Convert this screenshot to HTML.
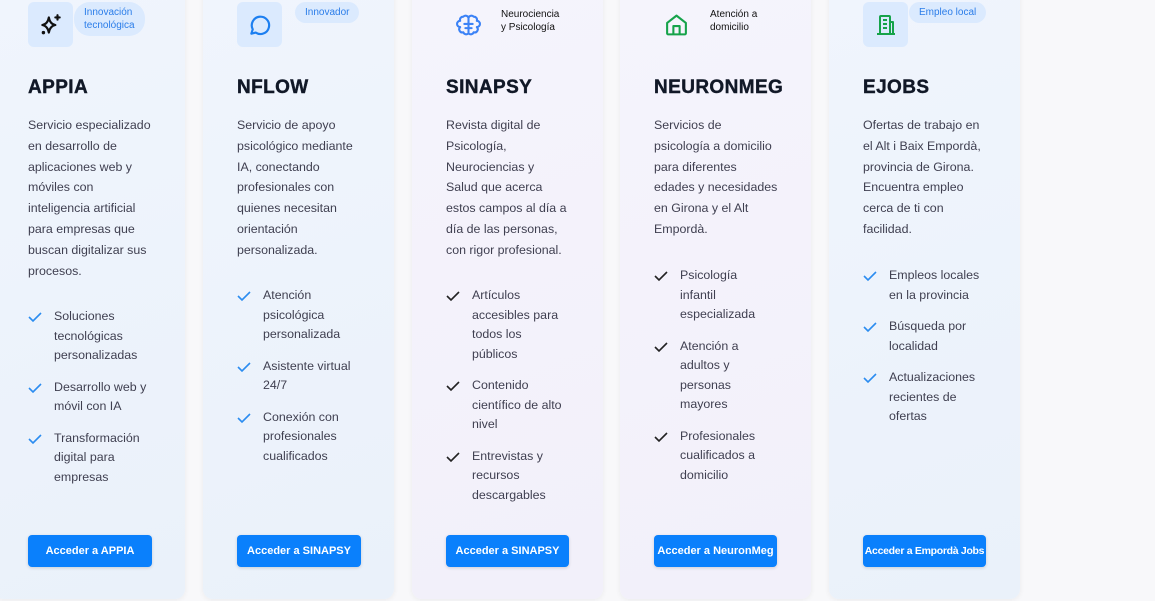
<!DOCTYPE html>
<html><head><meta charset="utf-8"><style>
*{margin:0;padding:0;box-sizing:border-box}
body{width:1155px;height:601px;overflow:hidden;background:#f8f8fa;font-family:"Liberation Sans",sans-serif;position:relative}
.card{position:absolute;top:-20px;width:191px;height:619px;border-radius:10px;box-shadow:0 1px 6px rgba(0,0,0,.06)}
.b{background:linear-gradient(160deg,#f0f5fd,#eaf1fa)}
.p{background:linear-gradient(160deg,#f5f4fc,#f2f0fa)}
.c{position:absolute;left:34px;top:20px;width:180px;height:600px}
.ib{position:absolute;left:0;top:2px;width:45px;height:45px;border-radius:6px;background:#dbeafe;display:flex;align-items:center;justify-content:center}
.bd{position:absolute;top:2px;background:#dbeafe;color:#2b7de9;font-size:10px;line-height:13px;border-radius:16px;padding:4px 10px}
h2{position:absolute;top:77px;left:0;font-size:19px;font-weight:bold;color:#111827;letter-spacing:.4px;-webkit-text-stroke:.4px #111827}
.d{position:absolute;left:0;top:115px;font-size:12.4px;line-height:20.8px;color:#3f3f50;white-space:nowrap}
ul{position:absolute;left:0;list-style:none;font-size:12.4px;line-height:19.5px;color:#3f3f50;white-space:nowrap}
li{position:relative;padding-left:26px;margin-bottom:12px}
li svg{position:absolute;left:0;top:4px}
.btn{position:absolute;left:0;top:535px;height:32px;background:#0a80fc;color:#fff;font-size:11px;font-weight:bold;border-radius:4px;display:flex;align-items:center;justify-content:center;white-space:nowrap;box-shadow:0 1px 3px rgba(0,0,0,.15)}
.sm{position:absolute;font-size:10px;line-height:13px;color:#111}
</style></head><body>

<div class="card b" style="left:-6px"><div class="c">
<div class="ib"><svg width="26" height="26" viewBox="0 0 24 24" fill="none" stroke="#111" stroke-width="2" stroke-linejoin="round" stroke-linecap="round"><path d="M10 5 Q11 11 16 12 Q11 13 10 19 Q9 13 4 12 Q9 11 10 5Z"/><path d="M18 3v4M16 5h4"/><circle cx="5" cy="19" r=".6" fill="#111"/></svg></div>
<div class="bd" style="left:46px">Innovación<br>tecnológica</div>
<h2>APPIA</h2>
<div class="d">Servicio especializado<br>en desarrollo de<br>aplicaciones web y<br>móviles con<br>inteligencia artificial<br>para empresas que<br>buscan digitalizar sus<br>procesos.</div>
<ul style="top:307px">
<li><svg width="14" height="12" viewBox="0 0 14 12"><path d="M1 6l4 4 8-8" fill="none" stroke="#2b8cf0" stroke-width="1.6"/></svg>Soluciones<br>tecnológicas<br>personalizadas</li>
<li><svg width="14" height="12" viewBox="0 0 14 12"><path d="M1 6l4 4 8-8" fill="none" stroke="#2b8cf0" stroke-width="1.6"/></svg>Desarrollo web y<br>móvil con IA</li>
<li><svg width="14" height="12" viewBox="0 0 14 12"><path d="M1 6l4 4 8-8" fill="none" stroke="#2b8cf0" stroke-width="1.6"/></svg>Transformación<br>digital para<br>empresas</li>
</ul>
<div class="btn" style="width:124px">Acceder a APPIA</div>
</div></div>

<div class="card b" style="left:203px"><div class="c">
<div class="ib"><svg width="26" height="26" viewBox="0 0 24 24" fill="none" stroke="#1d7ff0" stroke-width="2" stroke-linejoin="round"><path d="M4 20l1.3-4A8 8 0 1 1 8 19Z"/></svg></div>
<div class="bd" style="left:58px">Innovador</div>
<h2>NFLOW</h2>
<div class="d">Servicio de apoyo<br>psicológico mediante<br>IA, conectando<br>profesionales con<br>quienes necesitan<br>orientación<br>personalizada.</div>
<ul style="top:286px">
<li><svg width="14" height="12" viewBox="0 0 14 12"><path d="M1 6l4 4 8-8" fill="none" stroke="#2b8cf0" stroke-width="1.6"/></svg>Atención<br>psicológica<br>personalizada</li>
<li><svg width="14" height="12" viewBox="0 0 14 12"><path d="M1 6l4 4 8-8" fill="none" stroke="#2b8cf0" stroke-width="1.6"/></svg>Asistente virtual<br>24/7</li>
<li><svg width="14" height="12" viewBox="0 0 14 12"><path d="M1 6l4 4 8-8" fill="none" stroke="#2b8cf0" stroke-width="1.6"/></svg>Conexión con<br>profesionales<br>cualificados</li>
</ul>
<div class="btn" style="width:124px">Acceder a SINAPSY</div>
</div></div>

<div class="card p" style="left:412px"><div class="c">
<svg style="position:absolute;left:10px;top:12px" width="25" height="26" viewBox="0 0 24 24" fill="none" stroke="#3b82f6" stroke-width="2" stroke-linejoin="round" stroke-linecap="round"><path d="M12 5v15M12 5a3 3 0 0 0-5-1 3 3 0 0 0-3 4 3 3 0 0 0 0 6 3 3 0 0 0 3 5 3 3 0 0 0 5 1M12 5a3 3 0 0 1 5-1 3 3 0 0 1 3 4 3 3 0 0 1 0 6 3 3 0 0 1-3 5 3 3 0 0 1-5 1M8 11h8M9 15h6"/></svg>
<div class="sm" style="left:55px;top:8px">Neurociencia<br>y Psicología</div>
<h2>SINAPSY</h2>
<div class="d">Revista digital de<br>Psicología,<br>Neurociencias y<br>Salud que acerca<br>estos campos al día a<br>día de las personas,<br>con rigor profesional.</div>
<ul style="top:286px">
<li><svg width="14" height="12" viewBox="0 0 14 12"><path d="M1 6l4 4 8-8" fill="none" stroke="#222" stroke-width="1.6"/></svg>Artículos<br>accesibles para<br>todos los<br>públicos</li>
<li><svg width="14" height="12" viewBox="0 0 14 12"><path d="M1 6l4 4 8-8" fill="none" stroke="#222" stroke-width="1.6"/></svg>Contenido<br>científico de alto<br>nivel</li>
<li><svg width="14" height="12" viewBox="0 0 14 12"><path d="M1 6l4 4 8-8" fill="none" stroke="#222" stroke-width="1.6"/></svg>Entrevistas y<br>recursos<br>descargables</li>
</ul>
<div class="btn" style="width:123px">Acceder a SINAPSY</div>
</div></div>

<div class="card p" style="left:620px"><div class="c">
<svg style="position:absolute;left:10px;top:12px" width="25" height="26" viewBox="0 0 24 24" fill="none" stroke="#16a34a" stroke-width="2" stroke-linejoin="round"><path d="M3 10l9-7 9 7v10a1 1 0 0 1-1 1H4a1 1 0 0 1-1-1Z"/><path d="M9 21v-8h6v8"/></svg>
<div class="sm" style="left:56px;top:8px">Atención a<br>domicilio</div>
<h2>NEURONMEG</h2>
<div class="d">Servicios de<br>psicología a domicilio<br>para diferentes<br>edades y necesidades<br>en Girona y el Alt<br>Empordà.</div>
<ul style="top:266px">
<li><svg width="14" height="12" viewBox="0 0 14 12"><path d="M1 6l4 4 8-8" fill="none" stroke="#222" stroke-width="1.6"/></svg>Psicología<br>infantil<br>especializada</li>
<li><svg width="14" height="12" viewBox="0 0 14 12"><path d="M1 6l4 4 8-8" fill="none" stroke="#222" stroke-width="1.6"/></svg>Atención a<br>adultos y<br>personas<br>mayores</li>
<li><svg width="14" height="12" viewBox="0 0 14 12"><path d="M1 6l4 4 8-8" fill="none" stroke="#222" stroke-width="1.6"/></svg>Profesionales<br>cualificados a<br>domicilio</li>
</ul>
<div class="btn" style="width:123px">Acceder a NeuronMeg</div>
</div></div>

<div class="card b" style="left:829px"><div class="c">
<div class="ib"><svg width="24" height="24" viewBox="0 0 24 24" fill="none" stroke="#16a34a" stroke-width="2" stroke-linejoin="round"><rect x="6" y="3" width="10" height="18" rx="1"/><path d="M16 9h3v12h-3M3 21h18M9 7h4M9 11h4M9 15h4"/></svg></div>
<div class="bd" style="left:46px">Empleo local</div>
<h2>EJOBS</h2>
<div class="d">Ofertas de trabajo en<br>el Alt i Baix Empordà,<br>provincia de Girona.<br>Encuentra empleo<br>cerca de ti con<br>facilidad.</div>
<ul style="top:266px">
<li><svg width="14" height="12" viewBox="0 0 14 12"><path d="M1 6l4 4 8-8" fill="none" stroke="#2b8cf0" stroke-width="1.6"/></svg>Empleos locales<br>en la provincia</li>
<li><svg width="14" height="12" viewBox="0 0 14 12"><path d="M1 6l4 4 8-8" fill="none" stroke="#2b8cf0" stroke-width="1.6"/></svg>Búsqueda por<br>localidad</li>
<li><svg width="14" height="12" viewBox="0 0 14 12"><path d="M1 6l4 4 8-8" fill="none" stroke="#2b8cf0" stroke-width="1.6"/></svg>Actualizaciones<br>recientes de<br>ofertas</li>
</ul>
<div class="btn" style="width:123px;font-size:10.5px;letter-spacing:-.3px">Acceder a Empordà Jobs</div>
</div></div>

</body></html>
